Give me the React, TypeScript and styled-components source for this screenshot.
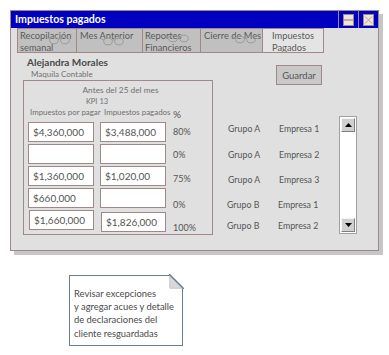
import styled, { createGlobalStyle } from 'styled-components';

const GlobalStyle = createGlobalStyle`
  body {
    margin: 0;
    background: #ffffff;
    font-family: Lato, 'Open Sans', sans-serif;
    color: #555555;
  }
`;

const Page = styled.div`
  padding: 10px 0 0 10px;
  width: 389px;
  height: 355px;
  box-sizing: border-box;
`;

const Window = styled.div`
  width: 369px;
  height: 241px;
  box-sizing: border-box;
  border: 1px solid #a08888;
  background: #e0e0e0;
  box-shadow: 4px 4px 0 #c6c6c6;
  display: flex;
  flex-direction: column;
`;

const TitleBar = styled.div`
  height: 17px;
  background: #0000c0;
  display: flex;
  align-items: stretch;
`;

const Title = styled.div`
  flex: 1;
  padding-left: 4px;
  color: #ffffff;
  font-weight: 700;
  font-size: 10.6px;
  line-height: 17px;
`;

const ControlCell = styled.div`
  width: 19px;
  border-left: 1px solid #a08888;
  display: flex;
  align-items: center;
  justify-content: center;
`;

const ControlBox = styled.div`
  width: 11px;
  height: 12px;
  box-sizing: border-box;
  border: 1px solid #a08888;
  background: #eee4dc;
  display: flex;
  align-items: center;
  justify-content: center;
`;

const Tabs = styled.div`
  display: flex;
  padding-left: 7px;
  height: 25px;
`;

const Tab = styled.div<{ $w: number; $active?: boolean; $indent?: number }>`
  position: relative;
  width: ${p => p.$w}px;
  height: 25px;
  box-sizing: border-box;
  margin-left: -1px;
  border: 1px solid #a08888;
  background: ${p => (p.$active ? '#e4e4e4' : '#c0c0c0')};
  padding: 1px 0 0 ${p => p.$indent ?? 2}px;
  font-size: 9.3px;
  line-height: 12px;
  color: #5a5a5a;
  white-space: nowrap;
  overflow: hidden;
`;

const Glasses = styled.svg<{ $x: number; $y: number }>`
  position: absolute;
  left: ${p => p.$x}px;
  top: ${p => p.$y}px;
`;

const Body = styled.div`
  flex: 1;
  display: flex;
`;

const LeftCol = styled.div`
  padding: 3px 0 0 12px;
  display: flex;
  flex-direction: column;
`;

const Name = styled.div`
  margin-left: 4px;
  font-weight: 700;
  font-size: 10px;
  line-height: 13px;
  color: #4a4a4a;
`;

const Sub = styled.div`
  margin-left: 8px;
  font-size: 8px;
  line-height: 11px;
  color: #707070;
`;

const Panel = styled.div`
  width: 190px;
  height: 155px;
  box-sizing: border-box;
  border: 1px solid #a08888;
  padding: 4px 0 0 4px;
`;

const PanelTitle = styled.div`
  width: 185px;
  text-align: center;
  font-size: 8.3px;
  line-height: 11px;
  color: #707070;
`;

const Kpi = styled.div`
  width: 138px;
  margin-top: 1px;
  text-align: center;
  font-size: 7.5px;
  line-height: 10px;
  color: #707070;
`;

const Grid = styled.div`
  display: grid;
  grid-template-columns: 66px 66px auto;
  column-gap: 6px;
  row-gap: 2px;
  align-items: start;
`;

const Head = styled.div<{ $pad: number }>`
  padding-left: ${p => p.$pad}px;
  font-size: 7.9px;
  line-height: 11px;
  color: #707070;
  white-space: nowrap;
`;

const PercentHead = styled.div`
  padding: 2px 0 0 1px;
  font-size: 10px;
  line-height: 11px;
  color: #555555;
`;

const Percent = styled.div<{ $drop: number }>`
  height: 20px;
  box-sizing: border-box;
  padding: ${p => p.$drop}px 0 0 1px;
  font-size: 9px;
  line-height: 20px;
  color: #555555;
`;

const Field = styled.div<{ $dx?: number; $dy?: number }>`
  height: 20px;
  box-sizing: border-box;
  margin: ${p => p.$dy ?? 0}px 0 0 ${p => p.$dx ?? 0}px;
  background: #ffffff;
  border: 1px solid #a08888;
  padding-left: 4px;
  font-size: 10px;
  line-height: 18px;
  color: #555555;
`;

const RightCol = styled.div`
  flex: 1;
  display: flex;
  flex-direction: column;
`;

const ButtonRow = styled.div`
  display: flex;
  justify-content: flex-end;
  padding: 12px 56px 0 0;
`;

const Button = styled.button`
  width: 46px;
  height: 20px;
  box-sizing: border-box;
  border: 1px solid #a08888;
  background: #c8c8c8;
  padding: 0;
  font-family: Lato, 'Open Sans', sans-serif;
  font-size: 9.5px;
  color: #555555;
`;

const ListArea = styled.div`
  display: flex;
  margin-top: 31px;
  padding-left: 14px;
`;

const List = styled.div`
  width: 112px;
  display: flex;
  flex-direction: column;
`;

const ListRow = styled.div<{ $h: number; $dx?: number }>`
  height: ${p => p.$h}px;
  display: grid;
  grid-template-columns: 51px auto;
  align-items: center;
  padding-left: ${p => p.$dx ?? 1}px;
  font-size: 8.8px;
  color: #555555;
`;

const Scroll = styled.div`
  width: 18px;
  height: 118px;
  box-sizing: border-box;
  border: 1px solid #a0a0a0;
  background: #ffffff;
  padding: 1px;
  display: flex;
  flex-direction: column;
  justify-content: space-between;
`;

const ScrollButton = styled.div`
  height: 14px;
  box-sizing: border-box;
  background: #d0d0d0;
  border: 1px solid;
  border-color: #f4f4f4 #808080 #808080 #f4f4f4;
  display: flex;
  align-items: center;
  justify-content: center;
`;

const Note = styled.div`
  position: relative;
  margin: 24px 0 0 59px;
  width: 114px;
  height: 71px;
  box-sizing: border-box;
  border: 1.5px solid #6a7f90;
  background: #ffffff;
  padding: 11px 0 0 4px;
  font-size: 9.4px;
  line-height: 13.2px;
  color: #4a4a4a;
`;

const Fold = styled.svg`
  position: absolute;
  top: -2px;
  right: -2px;
`;

const tabs = [
  { w: 60, label: ['Recopilación', 'semanal'], g: [28, 6] },
  { w: 67, label: ['Mes Anterior'], g: [23, 7], indent: 3 },
  { w: 59, label: ['Reportes', 'Financieros'], g: [22, 4] },
  { w: 63, label: ['Cierre de Mes'], g: [31, 5], indent: 3 },
  { w: 62, label: ['Impuestos', 'Pagados'], active: true, indent: 9 },
];

const rows = [
  { a: '$4,360,000', b: '$3,488,000', pct: '80%', drop: 0 },
  { a: '', b: '', pct: '0%', drop: 1 },
  { a: '$1,360,000', b: '$1,020,00', pct: '75%', drop: 3 },
  { a: '$660,000', b: '', pct: '0%', drop: 7 },
  { a: '$1,660,000', b: '$1,826,000', pct: '100%', drop: 8, nudge: true },
];

const companies = [
  { g: 'Grupo A', e: 'Empresa 1', h: 25 },
  { g: 'Grupo A', e: 'Empresa 2', h: 26 },
  { g: 'Grupo A', e: 'Empresa 3', h: 25 },
  { g: 'Grupo B', e: 'Empresa 1', h: 24, dx: 0 },
  { g: 'Grupo B', e: 'Empresa 2', h: 18, dx: 0 },
];

function GlassesIcon({ x, y }: { x: number; y: number }) {
  return (
    <Glasses $x={x} $y={y} width="26" height="10" viewBox="0 0 26 10">
      <g fill="none" stroke="#9c9c9c" strokeWidth="1">
        <path d="M1 3 L4 4" />
        <ellipse cx="8" cy="5.5" rx="4.3" ry="3.3" />
        <path d="M12 4 L15 4" />
        <ellipse cx="19" cy="5.5" rx="4.3" ry="3.3" />
      </g>
    </Glasses>
  );
}

export default function App() {
  return (
    <>
      <GlobalStyle />
      <Page>
        <Window>
          <TitleBar>
            <Title>Impuestos pagados</Title>
            <ControlCell>
              <ControlBox>
                <svg width="9" height="10" viewBox="0 0 9 10">
                  <path d="M0 5 H9" stroke="#a08888" strokeWidth="1.2" />
                </svg>
              </ControlBox>
            </ControlCell>
            <ControlCell>
              <ControlBox>
                <svg width="9" height="10" viewBox="0 0 9 10">
                  <path d="M1 1.5 L8 8.5 M8 1.5 L1 8.5" stroke="#b0a0a0" strokeWidth="1" />
                </svg>
              </ControlBox>
            </ControlCell>
          </TitleBar>

          <Tabs>
            {tabs.map((t, i) => (
              <Tab key={i} $w={t.w} $active={t.active} $indent={t.indent}>
                {t.label.map((l, j) => (
                  <div key={j}>{l}</div>
                ))}
                {t.g && <GlassesIcon x={t.g[0]} y={t.g[1]} />}
              </Tab>
            ))}
          </Tabs>

          <Body>
            <LeftCol>
              <Name>Alejandra Morales</Name>
              <Sub>Maquila Contable</Sub>
              <Panel>
                <PanelTitle>Antes del 25 del mes</PanelTitle>
                <Kpi>KPI 13</Kpi>
                <Grid>
                  <Head $pad={2}>Impuestos por pagar</Head>
                  <Head $pad={4}>Impuestos pagados</Head>
                  <PercentHead>%</PercentHead>
                  {rows.map((r, i) => [
                    <Field key={`a${i}`} $dx={r.nudge ? 1 : 0}>
                      {r.a}
                    </Field>,
                    <Field key={`b${i}`} $dx={r.nudge ? 1 : 0} $dy={r.nudge ? 2 : 0}>
                      {r.b}
                    </Field>,
                    <Percent key={`p${i}`} $drop={r.drop}>
                      {r.pct}
                    </Percent>,
                  ])}
                </Grid>
              </Panel>
            </LeftCol>

            <RightCol>
              <ButtonRow>
                <Button>Guardar</Button>
              </ButtonRow>
              <ListArea>
                <List>
                  {companies.map((c, i) => (
                    <ListRow key={i} $h={c.h} $dx={c.dx}>
                      <span>{c.g}</span>
                      <span>{c.e}</span>
                    </ListRow>
                  ))}
                </List>
                <Scroll>
                  <ScrollButton>
                    <svg width="7" height="4" viewBox="0 0 7 4">
                      <path d="M0 4 L3.5 0 L7 4 Z" fill="#000" />
                    </svg>
                  </ScrollButton>
                  <ScrollButton>
                    <svg width="7" height="4" viewBox="0 0 7 4">
                      <path d="M0 0 L7 0 L3.5 4 Z" fill="#000" />
                    </svg>
                  </ScrollButton>
                </Scroll>
              </ListArea>
            </RightCol>
          </Body>
        </Window>

        <Note>
          Revisar excepciones
          <br />
          y agregar acues y detalle
          <br />
          de declaraciones del
          <br />
          cliente resguardadas
          <Fold width="15" height="15" viewBox="0 0 15 15">
            <path d="M0 0 H15 V15 Z" fill="#ffffff" />
            <path d="M0.75 0.75 L14.25 14.25 L0.75 14.25 Z" fill="#d8d8d8" stroke="#c8c8c8" strokeWidth="1" />
            <path d="M0 0.75 H0.75 L14.25 14.25 V15" fill="none" stroke="#6a7f90" strokeWidth="1.5" />
          </Fold>
        </Note>
      </Page>
    </>
  );
}
